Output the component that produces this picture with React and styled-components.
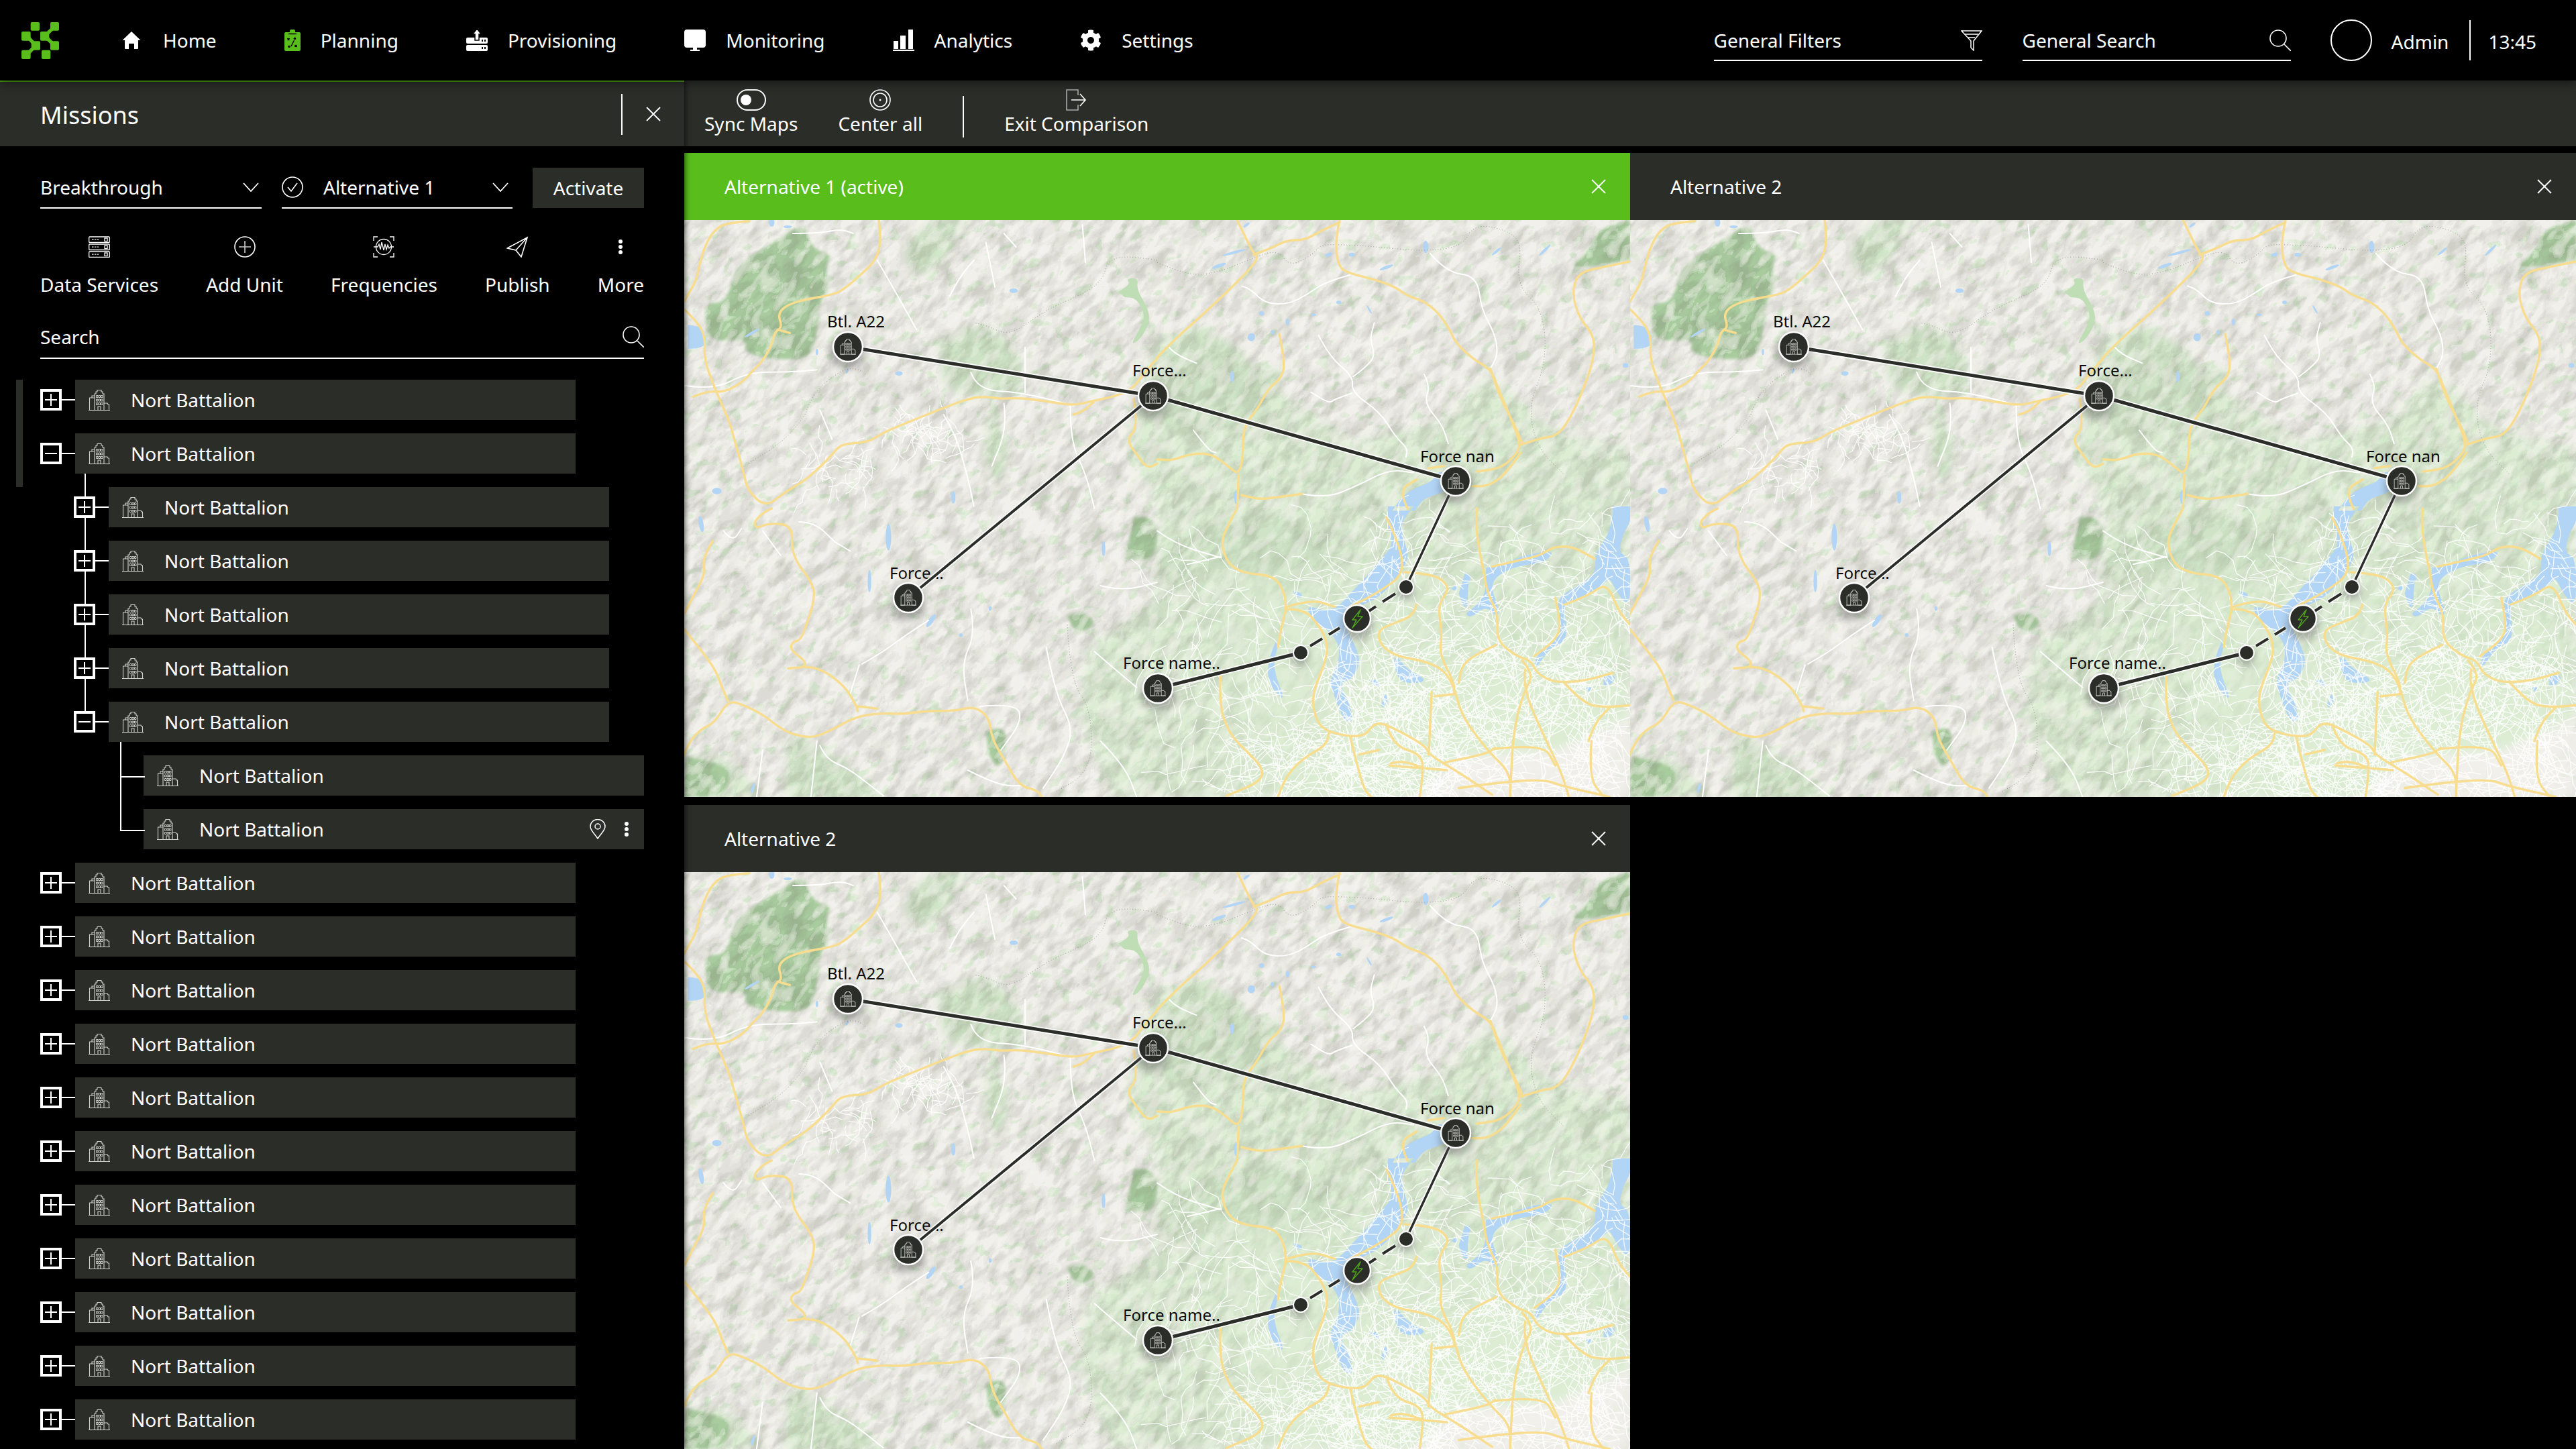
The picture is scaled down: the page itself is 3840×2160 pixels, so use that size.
import React from 'react';
import styled, { createGlobalStyle } from 'styled-components';
import { FaCog } from 'react-icons/fa';

const GREEN = '#59bd1c';
const PANEL = '#2b2d29';

const Global = createGlobalStyle`
  html, body { margin: 0; padding: 0; background: #000; }
  body { font-family: "Noto Sans", "Open Sans", sans-serif; color: #fff; }
  * { box-sizing: border-box; }
`;

/* ---------- page ---------- */
const Page = styled.div`
  width: 3840px; height: 2160px; overflow: hidden; background: #000;
  display: flex; flex-direction: column; font-size: 28px; line-height: 38px;
`;
const TopBar = styled.header`
  height: 120px; flex: none; background: #000; display: flex; align-items: center;
  padding: 0 59px 0 32px; position: relative; z-index: 3;
  box-shadow: 0 4px 14px rgba(0,0,0,.45);
`;
const NavList = styled.nav`display: flex; align-items: center; gap: 101px; margin-left: 95px;`;
const NavItem = styled.div`display: flex; align-items: center; gap: 30px; svg { display: block; flex: none; }`;
const RightGroup = styled.div`margin-left: auto; display: flex; align-items: center;`;
const TopField = styled.div`
  width: 400px; height: 60px; margin-top: 0; border-bottom: 2px solid #fff; margin-right: 60px;
  display: flex; align-items: center; justify-content: space-between; transform: translateY(1px);
`;
const Avatar = styled.div`width: 62px; height: 62px; border: 2px solid #fff; border-radius: 50%; margin-left: -1px;`;
const AdminName = styled.span`margin-left: 29px; margin-top: 4px;`;
const VRule = styled.div`width: 2px; height: ${p => p.$h}px; background: #fff; flex: none;`;
const TimeRule = styled(VRule)`margin: 0 26px 0 31px;`;
const Clock = styled.span`margin-top: 4px;`;

const Body = styled.div`flex: 1; display: flex; min-height: 0;`;

/* ---------- sidebar ---------- */
const Sidebar = styled.aside`
  width: 1020px; flex: none; background: #000; border-top: 2px solid #4a9c1c;
  display: flex; flex-direction: column; position: relative; z-index: 2;
  box-shadow: 2px 0 7px rgba(0,0,0,.55);
`;
const SideHead = styled.div`
  height: 96px; background: ${PANEL}; padding: 0 35px 0 60px; display: flex; align-items: center;
  font-size: 36px; flex: none;
`;
const SideTitle = styled.span`flex: 1; padding-top: 3px;`;
const HeadRule = styled(VRule)`margin-right: 35px;`;
const SelectRow = styled.div`display: flex; gap: 30px; margin: 32px 60px 0; height: 60px;`;
const Select = styled.div`
  width: ${p => p.$w}px; height: 61px; border-bottom: 2px solid #fff; display: flex; align-items: center; gap: 30px;
  padding-right: ${p => p.$pr}px; padding-bottom: 2px;
  > span { flex: 1; }
`;
const Activate = styled.div`
  width: 166px; height: 60px; background: ${PANEL}; display: flex; align-items: center; justify-content: center;
`;
const ActionRow = styled.div`display: flex; justify-content: space-between; margin: 42px 60px 0;`;
const Action = styled.div`
  display: flex; flex-direction: column; align-items: center; gap: ${p => p.$gap}px;
  svg { display: block; }
`;
const SearchBox = styled.div`
  margin: 30px 60px 0; height: 62px; border-bottom: 2px solid #fff; display: flex; align-items: center;
  justify-content: space-between; padding-bottom: 2px;
`;
const Tree = styled.div`display: flex; flex-direction: column; gap: 20px; margin-top: 31px; padding-left: 60px; position: relative;`;
const ScrollThumb = styled.div`position: absolute; left: 24px; top: 0; width: 10px; height: 160px; background: ${PANEL};`;
const Row = styled.div`display: flex; align-items: center; height: 60px;`;
const Expander = styled.div`
  width: 32px; height: 32px; border: 4px solid #fff; background: #000; position: relative; z-index: 1; flex: none;
  &::before { content: ''; position: absolute; left: 3px; right: 3px; top: 11px; height: 2px; background: #fff; }
  &::after { content: ''; position: absolute; top: 3px; bottom: 3px; left: 11px; width: 2px; background: #fff;
    display: ${p => (p.$open ? 'none' : 'block')}; }
`;
const Stub = styled.div`width: 20px; height: 2px; background: #fff; flex: none;`;
const Card = styled.div`
  width: 746px; height: 60px; background: ${PANEL}; display: flex; align-items: center; gap: 31px;
  padding: 0 22px 0 20px; flex: none;
  svg { display: block; flex: none; }
  > span { flex: 1; }
`;
const CardTools = styled.div`display: flex; align-items: center; gap: 27px;`;
const Branch = styled.div`
  display: flex; flex-direction: column; gap: 20px; margin-left: 50px; position: relative;
  &::before { content: ''; position: absolute; left: 16px; top: -20px; width: 2px; height: 370px; background: #fff; }
`;
const LeafGroup = styled.div`display: flex; flex-direction: column; gap: 20px; margin-left: 104px;`;
const Leaf = styled.div`
  position: relative; height: 60px;
  &::before { content: ''; position: absolute; left: -35px; top: -20px; width: 35px; height: 51px;
    border-left: 2px solid #fff; border-bottom: 2px solid #fff; }
  & + &::before { top: -50px; height: 81px; }
`;

/* ---------- main ---------- */
const Main = styled.main`flex: 1; min-width: 0; display: flex; flex-direction: column; background: #000;`;
const Toolbar = styled.div`
  height: 98px; flex: none; background: ${PANEL}; display: flex; align-items: flex-start; gap: 60px; padding: 13px 0 0 30px;
`;
const ToolRule = styled(VRule)`margin-top: 10px;`;
const Grid = styled.div`display: grid; grid-template-columns: 1410px 1410px; grid-auto-rows: 960px; row-gap: 12px; margin-top: 10px;`;
const MapPanel = styled.section`display: flex; flex-direction: column; min-height: 0;`;
const PanelHead = styled.div`
  height: 100px; flex: none; background: ${p => (p.$active ? GREEN : PANEL)}; display: flex; align-items: center;
  justify-content: space-between; padding: 0 36px 0 60px;
`;
const MapFrame = styled.div`position: relative; width: 1410px; height: 860px; overflow: hidden; background: #f1f0eb; flex: none;
  > svg { position: absolute; left: 0; top: 0; display: block; }
`;
const MapLabel = styled.div`
  position: absolute; left: ${p => p.$x}px; top: ${p => p.$y - 16}px; font-size: 24px; line-height: 32px; color: #0b0b0b; white-space: nowrap;
`;

/* ---------- icons ---------- */
const Line = ({ w = 32, h = 32, children, sw = 1.6, vb }) => (
  <svg width={w} height={h} viewBox={vb || `0 0 ${w} ${h}`} fill="none" stroke="#fff" strokeWidth={sw}>{children}</svg>
);
const Logo = () => (
  <svg width="56" height="55" viewBox="6 35 168 165">
    <g fill={GREEN}>
      <rect x="47" y="35" width="40" height="38" rx="6" />
      <rect x="135" y="35" width="39" height="38" rx="6" />
      <rect x="6" y="77" width="41" height="41" rx="6" />
      <rect x="50" y="120" width="40" height="40" rx="6" />
      <rect x="6" y="160" width="41" height="40" rx="6" />
      <rect x="90" y="77" width="40" height="41" rx="6" />
      <rect x="135" y="120" width="39" height="40" rx="6" />
      <rect x="96" y="160" width="40" height="40" rx="6" />
    </g>
    <g stroke={GREEN} strokeWidth="16" fill="none">
      <path d="M30 97 L70 140 L30 180" />
      <path d="M155 54 L110 97 L155 140" />
    </g>
  </svg>
);
const HomeIcon = () => (
  <svg width="30" height="26" viewBox="0 0 30 26"><path fill="#fff" d="M13 0 L26.500 13 H23 V25 Q23 26 22 26 H17 V18 H9 V26 H4 Q3 26 3 25 V13 H-.5 Z" /></svg>
);
const PlanningIcon = () => (
  <svg width="24" height="32" viewBox="0 0 24 32">
    <path fill={GREEN} d="M2 4 H8 V2 Q8 0 10 0 H14 Q16 0 16 2 V4 H22 Q24 4 24 6 V30 Q24 32 22 32 H2 Q0 32 0 30 V6 Q0 4 2 4Z" />
    <path stroke="#000" strokeWidth="1.500" fill="none" d="M6 6.500 H18 M4.500 13 l3 3 m0 -3 l-3 3 M15.500 23 l3 3 m0 -3 l-3 3 M14.500 16 L10 25" />
    <circle cx="15.500" cy="13.500" r="1.800" fill="#000" /><circle cx="7" cy="25.500" r="1.800" fill="#000" />
  </svg>
);
const ProvisionIcon = () => (
  <svg width="32" height="32" viewBox="0 0 32 32">
    <rect y="12" width="32" height="9" rx="2" fill="#fff" /><rect y="23" width="32" height="9" rx="2" fill="#fff" />
    <path fill="#fff" stroke="#000" strokeWidth="1.500" d="M16 -1 L22.500 7 H19 V16 H13 V7 H9.500 Z" />
    <g fill="#000"><rect x="23" y="15" width="2" height="3" /><rect x="27" y="15" width="2" height="3" /><rect x="23" y="26" width="2" height="3" /><rect x="27" y="26" width="2" height="3" /></g>
  </svg>
);
const MonitorIcon = () => (
  <svg width="32" height="32" viewBox="0 0 32 32"><path fill="#fff" d="M4 0 H28 Q32 0 32 4 V23 Q32 27 28 27 H19 V30 H23 V32 H9 V30 H13 V27 H4 Q0 27 0 23 V4 Q0 0 4 0Z" /></svg>
);
const BarsIcon = () => (
  <svg width="32" height="32" viewBox="0 0 32 32"><path fill="#fff" d="M1 17 H8 V29 H1Z M11 9 H19 V29 H11Z M23 0 H30 V29 H23Z M0 30 H32 V32 H0Z" /></svg>
);
const Funnel = () => (
  <Line sw={1.500}><path d="M1 2 H31 L19 17 V31 L15 27 V17 Z" /><path d="M6 7 H26 M11 12 H21" /></Line>
);
const Search = () => (
  <Line><circle cx="13" cy="13" r="12" /><path d="M22 22 L32 32" /></Line>
);
const Chevron = () => (
  <svg width="24" height="14" viewBox="0 0 24 14" fill="none" stroke="#fff" strokeWidth="1.800"><path d="M1 1 L12 13 L23 1" /></svg>
);
const CheckCircle = () => (
  <Line><circle cx="16" cy="16" r="15" /><path d="M9 16 L14 22 L23 10" /></Line>
);
const Close = () => (
  <svg width="22" height="22" viewBox="0 0 22 22" fill="none" stroke="#fff" strokeWidth="1.800"><path d="M1 1 L21 21 M21 1 L1 21" /></svg>
);
const ServerIcon = () => (
  <Line sw={1.300}>
    {[1, 12, 23].map(y => (
      <g key={y}>
        <rect x=".7" y={y} width="30.600" height="8.500" rx="1" />
        <rect x="24" y={y + 2} width="4" height="4.500" />
        <path d={`M5 ${y + 4.2} H15`} strokeDasharray="2.500 1.500" />
      </g>
    ))}
  </Line>
);
const PlusCircle = () => (
  <Line><circle cx="16" cy="16" r="15" /><path d="M7 16 H25 M16 7 V25" stroke="#ccc" /></Line>
);
const FreqIcon = () => (
  <Line sw={1.300}>
    <path d="M7 1 H1 V7 M25 1 H31 V7 M1 25 V31 H7 M31 25 V31 H25" />
    <circle cx="16" cy="16" r="11.500" />
    <path d="M1 16 H5 L7 16 L9 12 L11 20 L13 9 L16 21 L18 12 L20 20 L22 13 L24 18 L26 16 H31" />
  </Line>
);
const PlaneIcon = () => (
  <Line><path d="M31 2 L1 18 L14 21 L22 31 Z M31 2 L14 21" /></Line>
);
const Dots = ({ h = 32 }) => (
  <svg width="8" height={h} viewBox={`0 0 8 ${h}`} fill="#fff">
    <circle cx="4" cy={h / 2 - 8} r="3" /><circle cx="4" cy={h / 2} r="3" /><circle cx="4" cy={h / 2 + 8} r="3" />
  </svg>
);
const SyncIcon = () => (
  <svg width="44" height="32" viewBox="0 0 44 32" fill="none" stroke="#fff" strokeWidth="2">
    <rect x="1" y="1" width="42" height="30" rx="15" /><circle cx="14" cy="16" r="8" fill="#fff" stroke="none" />
  </svg>
);
const CenterIcon = () => (
  <Line><circle cx="16" cy="16" r="15" /><circle cx="16" cy="16" r="10" /><circle cx="16" cy="16" r="1.500" fill="#fff" stroke="none" /></Line>
);
const ExitIcon = () => (
  <Line><path d="M18 9 V1 H1 V31 H18 V23" stroke="#aaa" /><path d="M8 16 H29 M21 7 L29 16 L21 25" /></Line>
);
const Pin = () => (
  <svg width="24" height="30" viewBox="0 0 24 30" fill="none" stroke="#fff" strokeWidth="1.500">
    <path d="M12 29 C7 21 1 17 1 11 A11 10.500 0 0 1 23 11 C23 17 17 21 12 29Z" /><circle cx="12" cy="11" r="4" />
  </svg>
);
const BuildingLines = () => (
  <g fill="none" strokeWidth="1.100" stroke="#d6d6d2">
    <path d="M9 31.500 V7 H11 V4 H13 V1.500 H19 V4 H21 V7 H23 V31.500" />
    <path d="M9 13 H1.500 V31.500 H9 M23 21 H28 L29 23 H30.500 V31.500 H23 M5 13 V10 H9 M0 31.500 H32" />
    <path d="M14 31.500 V26 H18 V31.500" />
    <path d="M11.500 9.500 h2.500 v3 h-2.500z M15 9.500 h2.500 v3 h-2.500z M18.500 9.500 h2.500 v3 h-2.500z M11.500 15 h2.500 v3 h-2.500z M15 15 h2.500 v3 h-2.500z M18.500 15 h2.500 v3 h-2.500z M11.500 20.500 h2.500 v3 h-2.500z M15 20.500 h2.500 v3 h-2.500z M18.500 20.500 h2.500 v3 h-2.500z" strokeWidth=".9" />
  </g>
);
const Building = () => <svg width="32" height="32" viewBox="0 0 32 32"><BuildingLines /></svg>;

/* ---------- map data, traced per quadrant (crop coords) ---------- */
const ORIG = [[0, 0], [705, 0], [0, 430], [705, 430]];
const pts = (q, s) => s.trim().split(/\s+/).map(p => {
  const [x, y] = p.split(',').map(Number);
  return [x / 2.224 + ORIG[q][0], y / 3 + ORIG[q][1]];
});
const f = n => n.toFixed(1);
const smooth = (q, s) => {
  const a = pts(q, s);
  let d = `M${f(a[0][0])} ${f(a[0][1])}`;
  for (let i = 1; i < a.length - 1; i++) {
    d += `Q${f(a[i][0])} ${f(a[i][1])} ${f((a[i][0] + a[i + 1][0]) / 2)} ${f((a[i][1] + a[i + 1][1]) / 2)}`;
  }
  const l = a[a.length - 1];
  return d + `L${f(l[0])} ${f(l[1])}`;
};
const join = list => list.map(([q, s]) => smooth(q, s)).join('');
const area = list => list.map(([q, s]) => smooth(q, s) + 'Z').join('');

const YELLOW = join([
  [0, '215,5 140,12 100,45 70,110 50,200 40,270 10,340 0,365'],
  [0, '0,400 40,450 70,520 65,620 100,750 150,900 170,1000 195,1120 210,1210 270,1285 330,1220 400,1165 450,1105 490,1050 520,1000 610,995 660,950 750,900 860,840 950,795 1000,790 1050,800 1110,795 1200,810 1290,830 1350,810 1440,785 1490,750 1520,690 1568,620'],
  [0, '1290,870 1320,860 1360,810'],
  [0, '645,0 655,100 630,190 580,250 530,310 490,335 400,355 340,380 310,420 325,480 300,500 290,560 260,630 230,670 190,730 130,770 80,765 30,790'],
  [0, '1490,800 1505,930 1465,980 1500,1050 1535,1110 1568,1090'],
  [0, '310,490 350,505'],
  [1, '0,615 60,530 150,425 240,310 300,230 335,170 320,150 290,70 265,0'],
  [1, '320,155 380,125 430,90 490,90 540,50 605,10'],
  [1, '605,0 590,90 600,210 640,240 720,265 790,300 830,340 880,360 930,410 970,490 990,550 1050,625 1105,665 1130,750 1170,880 1205,1000 1190,1050 1140,1110 1060,1125'],
  [1, '1105,665 1120,730 1150,830 1190,930 1210,1000'],
  [1, '1205,1005 1270,975 1330,965 1380,860 1430,700 1450,590 1445,510 1400,440 1375,330 1395,235 1480,210 1568,185'],
  [1, '1205,1040 1160,1130 1100,1190 1045,1190'],
  [1, '405,510 425,640 410,710 370,750 330,850 285,925 285,1060 270,1140 235,1100 180,1045 110,1045 50,1075 0,1070'],
  [1, '270,1140 265,1290'],
  [1, '280,1230 330,1250 400,1240 480,1225'],
  [1, '900,1110 950,1100'],
  [1, '830,1290 800,1210 860,1160'],
  [2, '0,540 60,640 105,725 125,800 145,860'],
  [2, '95,145 60,220 70,290 35,380 0,470'],
  [2, '290,0 270,10 230,60 240,90 280,65 360,75 355,210 430,340 430,420 405,520 385,590 360,595 350,630 400,680 400,710 345,715'],
  [2, '400,710 440,705 530,790 570,880 575,905'],
  [2, '0,1100 10,1060 50,990 100,960 145,860 190,875 260,920 320,985 370,1015 430,1025 490,990 570,930 650,915 720,920 800,905 900,905 960,885 1010,930 1020,1030 1060,1120 1110,1240 1170,1260 1185,1290'],
  [2, '575,885 640,895'],
  [3, '265,0 240,60 210,150 235,250 290,290 380,300 415,350 430,440 410,540 400,620'],
  [3, '210,750 205,880 240,1010 300,1090 350,1160 345,1220 230,1285'],
  [3, '430,450 490,450 540,530 565,600 560,680 510,840 530,960 570,1000 640,1020 690,1015 720,960 760,965 890,1060 900,1100 1000,1180 1110,1280'],
  [3, '430,440 510,405 590,440'],
  [3, '760,965 780,1060 880,1100 880,1200 870,1290'],
  [3, '760,40 800,150 820,290 740,370 640,440'],
  [3, '820,285 880,290 940,310 970,360 930,430 945,560 935,650 985,780 985,830'],
  [3, '860,430 850,480 790,510 730,545 740,610 790,660 880,680 950,720 985,800 1010,930 1100,1090 1170,1180 1170,1290'],
  [3, '1060,0 1055,70 1070,200 1085,300 1095,380 1130,470 1125,590 1190,660 1240,680 1260,740 1320,780 1420,770 1510,735'],
  [3, '1125,610 1060,650 1010,700 1000,780'],
  [3, '1210,680 1250,740 1215,820 1180,1000 1170,1290'],
  [3, '1220,720 1210,800 1290,1040 1340,1180 1365,1290'],
  [3, '1120,1075 1280,1050 1320,1150'],
  [3, '955,1135 1090,1100 1120,1070'],
  [3, '1350,780 1410,870 1480,890 1568,880'],
  [3, '1430,1040 1450,960 1500,890'],
  [3, '1000,1250 1100,1230 1280,1210 1340,1240 1500,1290'],
  [3, '920,840 985,830'],
  [3, '910,820 900,1100'],
  [3, '1110,260 1190,235 1270,210 1315,170 1380,170 1450,225'],
  [3, '1320,400 1340,520 1320,590 1250,660'],
  [3, '1350,430 1430,390 1490,330 1530,460 1568,520'],
  [3, '400,1290 420,1210 480,1120 560,1060 570,1000'],
  [3, '640,1020 680,1250 710,1290'],
  [3, '770,1150 870,1160 960,1170'],
  [3, '670,1100 735,1080'],
  [3, '775,1140 810,1125 880,1160'],
  [3, '1440,1040 1430,1200 1480,1290'],
]);
const WHITE = join([
  [0, '640,180 700,320 770,490'], [0, '960,180 920,240 880,340'], [0, '1000,100 1030,300'],
  [0, '0,740 100,760 210,680 350,680 440,670'],
  [0, '360,60 440,60 520,40 560,60'], [0, '1060,60 1100,120'], [0, '1320,20 1330,190'],
  [0, '450,850 490,980'], [0, '860,870 900,960 940,1150 960,1280'], [0, '1280,830 1280,990 1330,1130 1360,1290'],
  [0, '950,680 970,760 1120,770 1290,830'], [0, '1060,820 1070,930 1020,1100'], [0, '1130,570 1130,770'],
  [1, '640,245 560,275 500,330 440,375 360,375 310,310 280,295'],
  [1, '905,150 960,235 1060,250 1075,400 1120,510 1130,600 1105,665'],
  [1, '535,515 570,610 650,700 645,770 740,860 790,970 830,1020 825,1060'],
  [1, '650,700 710,640 720,590 705,530 720,460'],
  [1, '885,690 905,740 885,820 945,915 965,1000'],
  [1, '645,775 590,800 570,820 510,770'],
  [1, '480,1225 560,1245 660,1190 770,1115 850,1130'],
  [1, '120,940 170,1030 195,1040'], [1, '40,570 60,600 130,640'],
  [2, '130,100 160,150 190,90'], [2, '260,100 320,210'],
  [2, '450,1060 470,1120 540,1160 600,1220 660,1285'],
  [2, '950,450 965,560 920,690 940,860'],
  [2, '590,695 650,650 730,570 810,500'],
  [2, '1200,620 1230,830 1290,980 1260,1110 1190,1250'],
  [2, '580,700 550,830'], [2, '440,1040 420,1290'],
  [2, '1360,640 1420,710 1500,800'], [2, '1380,1040 1460,1150 1500,1290'],
  [2, '1380,345 1450,370 1568,330'], [2, '500,150 550,190'], [2, '380,60 430,60 500,150'],
  [2, '260,1080 240,1290'], [2, '940,1170 1040,1240 1130,1240'],
  [2, '980,885 1100,870 1120,950 1050,1080'],
  [3, '0,100 60,160 210,220'], [3, '100,250 210,215'],
]);
const LAKES = area([
  [0, '12,470 50,470 72,520 72,560 40,575 12,575'],
  [1, '780,1300 810,1235 860,1195 910,1170 935,1120 955,1140 960,1210 920,1230 880,1250 855,1300'],
  [3, '765,-10 760,60 785,160 740,230 690,310 640,380 600,440 555,460 495,430 510,490 540,520 580,560 605,620 600,700 570,770 590,850 620,950 650,955 640,880 615,820 610,775 640,770 672,700 665,640 640,570 620,520 660,440 720,410 780,340 810,280 835,215 820,150 805,70 850,-10'],
  [3, '395,590 370,660 365,770 410,850 420,840 395,760 385,680 403,610'],
  [3, '785,670 790,770 860,785 895,765 830,720 800,670'],
  [3, '1090,265 1130,262 1210,210 1300,190 1312,205 1275,245 1200,255 1130,295 1105,350 1132,440 1130,490 1090,435 1040,490 1020,470 1045,450 1085,390 1090,330'],
  [3, '1510,-10 1510,90 1450,200 1455,290 1400,340 1320,405 1340,520 1320,590 1260,650 1250,705 1262,705 1300,625 1360,590 1352,470 1350,430 1430,395 1490,325 1500,310 1530,390 1568,440 1568,220 1530,200 1545,110 1570,60 1570,-10'],
  [3, '1020,290 1045,290 1030,340 1030,440 1015,440 1000,380'],
  [3, '985,345 1000,350 990,370 975,360'],
  [3, '450,370 480,375 480,400 460,395'],
  [3, '755,830 770,850 750,895 742,880'],
  [3, '705,770 730,760 740,800 715,785'],
  [3, '1480,750 1525,740 1505,790 1480,790'],
  [3, '1420,800 1445,795 1430,820'],
]);
/* x, y, rx, ry, rotation in crop coordinates */
const PONDS = [
  [0, 290, 12, 9, 18, 0], [0, 1092, 316, 14, 10, 0], [0, 712, 686, 12, 10, 0], [0, 108, 1212, 16, 14, 0],
  [0, 892, 1240, 7, 28, 0], [0, 540, 675, 4, 12, 20], [0, 440, 590, 4, 14, 0], [0, 225, 505, 28, 6, -30], [0, 343, 30, 14, 6, 0],
  [1, 255, 145, 40, 6, -15], [1, 205, 205, 24, 8, -20], [1, 296, 22, 12, 6, -40], [1, 890, 120, 9, 28, 0], [1, 760, 212, 24, 7, -20],
  [1, 1125, 140, 20, 6, -40], [1, 1285, 135, 26, 6, -45], [1, 703, 400, 16, 4, 60], [1, 602, 368, 8, 8, 0], [1, 346, 418, 8, 10, 0],
  [1, 432, 456, 6, 14, 0], [1, 312, 524, 12, 18, 20], [1, 382, 502, 5, 10, 0], [1, 518, 424, 8, 6, 0], [1, 248, 700, 6, 26, 0],
  [1, 568, 155, 12, 8, -20], [1, 645, 155, 10, 9, 0], [1, 262, 1240, 7, 30, 0], [1, 1553, 650, 10, 10, 0],
  [2, 56, 70, 8, 36, -10], [2, 677, 128, 9, 60, 0], [2, 614, 325, 6, 50, 0], [2, 1390, 180, 6, 34, 0], [2, 818, 502, 8, 34, 35],
  [2, 1014, 447, 5, 10, 0], [2, 917, 566, 6, 8, 0], [2, 228, 1250, 5, 24, 15],
];
const FOREST = area([
  [0, '400,30 420,130 490,150 470,200 482,310 450,360 440,510 420,620 290,625 195,590 210,530 90,545 68,460 70,370 140,370 170,210 260,130 370,35'],
  [1, '1568,0 1460,30 1430,150 1350,225 1568,180'],
  [2, '1270,480 1320,455 1370,515 1310,560 1285,525'],
  [2, '0,1110 90,1130 160,1170 130,1290 0,1290'],
  [2, '1000,1000 1060,960 1070,1080 1040,1170 1010,1100'],
  [2, '1490,40 1568,20 1568,230 1460,230'],
]);
const MIDGREEN = area([
  [0, '840,0 712,100 770,260 850,210 900,60 960,0'],
  [0, '845,540 970,460 1060,520 1130,650 1120,775 960,790 860,750 850,600'],
  [0, '1000,860 1070,930 1070,1100 1030,1190 1000,1060'],
  [1, '30,600 100,450 200,520 290,590 310,680 420,650 400,760 330,880 250,930 100,960 0,920'],
  [3, '220,30 480,60 600,140 520,350 420,360 300,290 170,270 30,330 0,200'],
  [2, '340,1035 420,1030 520,1150 660,1290 340,1290'],
]);
const GREENLAND = `M705 170 L800 195 L900 265 L1000 330 L1130 300 L1200 230 L1290 310 L1410 340 L1410 740 L1300 790 L1150 800 L1090 860 L640 860 L590 740 L600 640 L700 570 L705 430 L660 330 Z
M0 860 L0 800 L60 800 L120 860 Z M150 860 L170 790 L220 800 L300 860 Z`;
const PARK = area([[0, '1440,320 1480,290 1465,262 1505,258 1500,310 1535,390 1545,450 1515,530 1480,560 1505,500 1530,430 1500,350 1460,345']]);
const BORDERS = join([
  [0, '1568,180 1460,155 1400,190 1390,260 1340,320 1200,400 1080,520 1000,470 960,460'],
  [0, '600,690 560,640 450,740 410,830 400,880 320,1000 210,1090'],
  [1, '0,190 100,250 200,235 300,180 400,130 440,210 520,150 540,110 620,110 730,120 880,140 1010,120 1050,20 1150,40 1210,100 1190,290 1280,400 1290,640 1230,830 1260,1020 1350,1140'],
  [2, '1270,520 1280,770 1350,900 1350,1170 1230,1270'],
]);

/* seeded road scatter */
const scatter = (() => {
  let s = 48271;
  const r = () => { s = (s * 1664525 + 1013904223) >>> 0; return s / 4294967296; };
  const zones = [
    [705, 500, 705, 360, 320, 16], [960, 640, 450, 220, 380, 14], [800, 720, 300, 140, 140, 12],
    [1140, 440, 270, 250, 90, 13], [290, 300, 130, 60, 40, 8], [170, 345, 110, 60, 30, 8], [1020, 440, 100, 70, 25, 10],
  ];
  let d = '';
  zones.forEach(([x, y, w, h, n, len]) => {
    for (let i = 0; i < n; i++) {
      let px = x + r() * w, py = y + r() * h, a = r() * Math.PI * 2;
      d += `M${f(px)} ${f(py)}`;
      const steps = 3 + Math.floor(r() * 4);
      for (let k = 0; k < steps; k++) {
        a += (r() - .5) * 1.5;
        px += Math.cos(a) * len * (.6 + r());
        py += Math.sin(a) * len * (.6 + r());
        d += `L${f(px)} ${f(py)}`;
      }
    }
  });
  return d;
})();

const MapCanvas = () => (
  <svg width="1410" height="860" viewBox="0 0 1410 860">
    <defs>
      <filter id="soft" x="-5%" y="-5%" width="110%" height="110%"><feGaussianBlur stdDeviation="7" /></filter>
      <filter id="softer" x="-5%" y="-5%" width="110%" height="110%"><feGaussianBlur stdDeviation="2" /></filter>
      <filter id="plainblur" x="-20%" y="-20%" width="140%" height="140%"><feGaussianBlur stdDeviation="35" /></filter>
      <filter id="ridge" x="0" y="0" width="100%" height="100%" colorInterpolationFilters="sRGB">
        <feTurbulence type="fractalNoise" baseFrequency="0.03 0.065" numOctaves="3" seed="11" />
        <feColorMatrix values="0 0 0 0 .42  0 0 0 0 .42  0 0 0 0 .38  2.6 0 0 0 -.85" />
        <feComponentTransfer><feFuncA type="discrete" tableValues="0 0 .05 .09 .13 .16" /></feComponentTransfer>
      </filter>
      <filter id="ridge2" x="0" y="0" width="100%" height="100%" colorInterpolationFilters="sRGB">
        <feTurbulence type="fractalNoise" baseFrequency="0.05 0.022" numOctaves="3" seed="31" />
        <feColorMatrix values="0 0 0 0 .42  0 0 0 0 .42  0 0 0 0 .38  2.6 0 0 0 -.85" />
        <feComponentTransfer><feFuncA type="discrete" tableValues="0 0 .04 .08 .11" /></feComponentTransfer>
      </filter>
      <filter id="flecks" x="0" y="0" width="100%" height="100%" colorInterpolationFilters="sRGB">
        <feTurbulence type="fractalNoise" baseFrequency="0.05 0.07" numOctaves="2" seed="23" />
        <feColorMatrix values="0 0 0 0 .82  0 0 0 0 .91  0 0 0 0 .79  0 2.6 0 0 -1.05" />
        <feComponentTransfer><feFuncA type="discrete" tableValues="0 0 0 .5 .75" /></feComponentTransfer>
      </filter>
      <filter id="light" x="0" y="0" width="100%" height="100%" colorInterpolationFilters="sRGB">
        <feTurbulence type="fractalNoise" baseFrequency="0.03 0.07" numOctaves="2" seed="5" />
        <feColorMatrix values="0 0 0 0 .96  0 0 0 0 .955  0 0 0 0 .93  0 0 2.4 0 -.85" />
        <feComponentTransfer><feFuncA type="discrete" tableValues="0 0 .25 .4 .5" /></feComponentTransfer>
      </filter>
      <mask id="nonplain" maskUnits="userSpaceOnUse" x="0" y="0" width="1410" height="860">
        <rect width="1410" height="860" fill="#fff" />
        <path filter="url(#plainblur)" fill="#000" d="M1000 640 L1300 650 L1420 720 L1420 880 L800 880 L780 760 Z" />
      </mask>
      <mask id="plainless" maskUnits="userSpaceOnUse" x="0" y="0" width="1410" height="860">
        <rect width="1410" height="860" fill="#fff" />
        <path filter="url(#plainblur)" fill="#666" d="M800 520 L1420 520 L1420 880 L800 880 Z" />
        <path filter="url(#plainblur)" fill="#000" d="M1050 660 L1300 650 L1420 720 L1420 880 L850 880 Z" />
      </mask>
    </defs>
    <rect width="1410" height="860" fill="#f1f0eb" />
    <path d={GREENLAND} fill="#dcedd3" filter="url(#soft)" />
    <path d={MIDGREEN} fill="#cfe4c6" filter="url(#soft)" />
    <path d={FOREST} fill="#a9cc9f" filter="url(#softer)" />
    <g mask="url(#nonplain)">
      <rect x="-500" y="-600" width="2400" height="2100" transform="rotate(-30 705 430)" filter="url(#flecks)" />
    </g>
    <g mask="url(#plainless)">
      <rect x="-500" y="-600" width="2400" height="2100" transform="rotate(-40 705 430)" filter="url(#ridge)" />
      <rect x="-500" y="-600" width="2400" height="2100" transform="rotate(25 705 430)" filter="url(#ridge2)" />
      <rect x="-500" y="-600" width="2400" height="2100" transform="rotate(-55 705 430)" filter="url(#light)" />
    </g>
    <path d={PARK} fill="#bfdeb5" />
    <path d={LAKES} fill="#b2d5f6" fillRule="evenodd" />
    <g fill="#b2d5f6">
      {PONDS.map(([q, x, y, rx, ry, rot], i) => {
        const [cx, cy] = pts(q, `${x},${y}`)[0];
        return <ellipse key={i} cx={cx} cy={cy} rx={rx / 2.224} ry={ry / 3} transform={`rotate(${rot} ${cx} ${cy})`} />;
      })}
    </g>
    <path d={BORDERS} fill="none" stroke="#97978f" strokeWidth="1" strokeDasharray="1 3" />
    <path d={scatter} fill="none" stroke="#fff" strokeWidth="1.300" strokeLinejoin="round" opacity=".85" />
    <path d={WHITE} fill="none" stroke="#fff" strokeWidth="2" strokeLinejoin="round" strokeLinecap="round" />
    <path d={YELLOW} fill="none" stroke="#f8dd8e" strokeWidth="3.400" strokeLinejoin="round" strokeLinecap="round" />
  </svg>
);

const LINKS = [
  [[244, 189], [699, 262], 5], [[699, 262], [1150, 389], 5], [[699, 262], [334, 563], 4], [[1150, 389], [1076, 547], 3.500], [[919, 645], [706, 698], 5],
];
const DASHES = [[[1060, 557], [1041, 569]], [[1031, 576], [1019, 584]], [[977, 608], [961, 618]], [[951, 624], [933, 635]]];
const UNITS = [[244, 189], [699, 262], [1150, 389], [334, 563], [706, 698]];

const MapOverlay = () => (
  <svg width="1410" height="860" viewBox="0 0 1410 860">
    <defs>
      <filter id="mshadow" x="-50%" y="-50%" width="200%" height="200%"><feGaussianBlur stdDeviation="6" /></filter>
    </defs>
    {LINKS.map(([a, b, w], i) => (
      <path key={i} d={`M${a[0]} ${a[1]}L${b[0]} ${b[1]}`} stroke="#fff" strokeWidth={w + 3.500} />
    ))}
    {DASHES.map(([a, b], i) => (
      <path key={i} d={`M${a[0]} ${a[1]}L${b[0]} ${b[1]}`} stroke="#fff" strokeWidth="7" />
    ))}
    {LINKS.map(([a, b, w], i) => (
      <path key={i} d={`M${a[0]} ${a[1]}L${b[0]} ${b[1]}`} stroke="#2b2d29" strokeWidth={w} />
    ))}
    {DASHES.map(([a, b], i) => (
      <path key={i} d={`M${a[0]} ${a[1]}L${b[0]} ${b[1]}`} stroke="#2b2d29" strokeWidth="4" />
    ))}
    {UNITS.map(([x, y]) => (
      <g key={x}>
        <circle cx={x} cy={y + 9} r="25" fill="#555" opacity=".42" filter="url(#mshadow)" />
        <circle cx={x} cy={y} r="22" fill="#2b2d29" stroke="#fff" strokeWidth="2.500" />
        <g transform={`translate(${x - 12} ${y - 12.500}) scale(.75)`}><BuildingLines /></g>
      </g>
    ))}
    {[[1076, 547], [919, 645]].map(([x, y]) => (
      <g key={x}>
        <circle cx={x} cy={y + 6} r="13" fill="#555" opacity=".42" filter="url(#mshadow)" />
        <circle cx={x} cy={y} r="11" fill="#2b2d29" stroke="#fff" strokeWidth="2" />
      </g>
    ))}
    <circle cx="1003" cy="602" r="24" fill="#555" opacity=".42" filter="url(#mshadow)" />
    <circle cx="1003" cy="594" r="20" fill="#2b2d29" stroke="#fff" strokeWidth="2.500" />
    <path d="M1008 581 L996 596 L1002 596 L996 608 L1011 591 L1004 591 Z" fill="none" stroke="#4fa51d" strokeWidth="1.400" strokeLinejoin="round" />
  </svg>
);

const LABELS = [
  ['Btl. A22', 213, 151], ['Force...', 668, 224], ['Force nan', 1097, 352], ['Force...', 306, 526], ['Force name..', 654, 660],
];

const AltPanel = ({ title, active }) => (
  <MapPanel>
    <PanelHead $active={active}><span>{title}</span><Close /></PanelHead>
    <MapFrame>
      <MapCanvas />
      {LABELS.map(([t, x, y]) => <MapLabel key={x} $x={x} $y={y}>{t}</MapLabel>)}
      <MapOverlay />
    </MapFrame>
  </MapPanel>
);

const Unit = ({ tools }) => (
  <Card>
    <Building />
    <span>Nort Battalion</span>
    {tools && <CardTools><Pin /><Dots h={24} /></CardTools>}
  </Card>
);
const TreeRow = ({ open }) => (
  <Row><Expander $open={open} /><Stub /><Unit /></Row>
);

const NAV = [
  ['Home', <HomeIcon />], ['Planning', <PlanningIcon />], ['Provisioning', <ProvisionIcon />],
  ['Monitoring', <MonitorIcon />], ['Analytics', <BarsIcon />], ['Settings', <FaCog size={32} color="#fff" />],
];
const ACTIONS = [
  ['Data Services', <ServerIcon />], ['Add Unit', <PlusCircle />], ['Frequencies', <FreqIcon />], ['Publish', <PlaneIcon />], ['More', <Dots />],
];

export default function App() {
  return (
    <Page>
      <Global />
      <TopBar>
        <Logo />
        <NavList>
          {NAV.map(([t, ic]) => <NavItem key={t}>{ic}<span>{t}</span></NavItem>)}
        </NavList>
        <RightGroup>
          <TopField><span>General Filters</span><Funnel /></TopField>
          <TopField><span>General Search</span><Search /></TopField>
          <Avatar />
          <AdminName>Admin</AdminName>
          <TimeRule $h={60} />
          <Clock>13:45</Clock>
        </RightGroup>
      </TopBar>
      <Body>
        <Sidebar>
          <SideHead><SideTitle>Missions</SideTitle><HeadRule $h={61} /><Close /></SideHead>
          <SelectRow>
            <Select $w={330} $pr={4}><span>Breakthrough</span><Chevron /></Select>
            <Select $w={344} $pr={6}><CheckCircle /><span>Alternative 1</span><Chevron /></Select>
            <Activate>Activate</Activate>
          </SelectRow>
          <ActionRow>
            {ACTIONS.map(([t, ic]) => <Action key={t} $gap={21}>{ic}<span>{t}</span></Action>)}
          </ActionRow>
          <SearchBox><span>Search</span><Search /></SearchBox>
          <Tree>
            <ScrollThumb />
            <TreeRow />
            <TreeRow open />
            <Branch>
              <TreeRow /><TreeRow /><TreeRow /><TreeRow /><TreeRow open />
              <LeafGroup>
                <Leaf><Unit /></Leaf>
                <Leaf><Unit tools /></Leaf>
              </LeafGroup>
            </Branch>
            {Array.from({ length: 11 }, (_, i) => <TreeRow key={i} />)}
          </Tree>
        </Sidebar>
        <Main>
          <Toolbar>
            <Action $gap={0}><SyncIcon /><span>Sync Maps</span></Action>
            <Action $gap={0}><CenterIcon /><span>Center all</span></Action>
            <ToolRule $h={62} />
            <Action $gap={0}><ExitIcon /><span>Exit Comparison</span></Action>
          </Toolbar>
          <Grid>
            <AltPanel title="Alternative 1 (active)" active />
            <AltPanel title="Alternative 2" />
            <AltPanel title="Alternative 2" />
          </Grid>
        </Main>
      </Body>
    </Page>
  );
}
